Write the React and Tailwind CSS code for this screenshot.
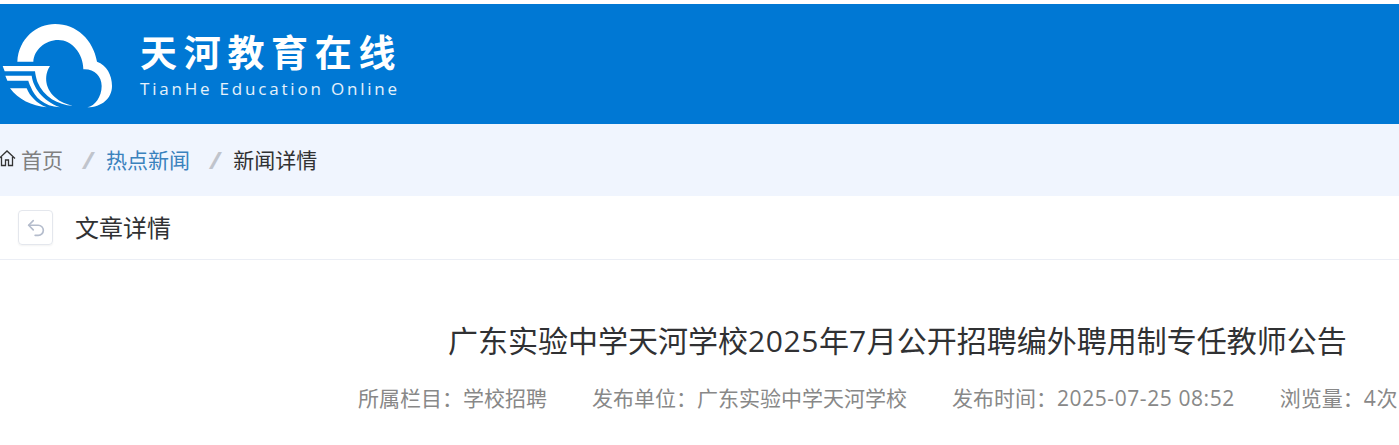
import React from 'react';
import { Undo2 } from 'lucide-react';

const cjk = 'font-["Open_Sans","Noto_Sans_CJK_SC",sans-serif]';

function Logo() {
  return (
    <svg width="130" height="110" viewBox="0 0 390 330" className="shrink-0 block">
      <path
        fill="#fff"
        d="M52 155 C56 85 110 42 165 42 C230 42 280 90 291 155 C320 165 336 195 336 228 C336 265 305 292 262 292 C285 288 305 260 305 228 C305 198 282 176 250 178 C250 130 215 90 175 90 C135 90 102 120 100 155 Z"
      />
      <path fill="#fff" d="M8 168 H150 C135 190 130 230 165 262 C180 276 200 284 218 287 C175 285 130 260 112 215 C108 203 106 192 105 184 H14 Z" />
      <path fill="#fff" d="M16 197 H95 C100 232 125 270 180 292 C130 288 105 262 92 230 C88 222 86 216 85 212 H22 Z" />
      <path fill="#fff" d="M30 235 H80 C90 260 110 280 140 292 C95 288 55 268 30 235 Z" />
    </svg>
  );
}

function HomeIcon() {
  return (
    <svg width="18" height="18" viewBox="0 0 18 18" fill="none" stroke="#333" strokeWidth="1.3" className="shrink-0 -ml-[2px] -mt-[5px]">
      <path d="M1 9.5 L9 2 L17 9.5" />
      <path d="M3.5 8 V16.5 H7.5 V11 H10.5 V16.5 H14.5 V8" />
    </svg>
  );
}

function Sep() {
  return <span className="ml-[20px] mr-[13px] text-[#c0c4cc] text-[24px] font-bold italic">/</span>;
}

export default function App() {
  return (
    <div className={`${cjk} h-[445px] overflow-hidden bg-white pt-1`}>
      <header className="h-[120px] bg-[#0078d4] flex items-start pt-[6px]">
        <Logo />
        <div className="ml-[10px] pt-[18px] text-white">
          <div className='font-["Noto_Sans_CJK_SC",sans-serif] text-[37px] leading-[46px] font-bold tracking-[6.7px]'>天河教育在线</div>
          <div className='font-["Open_Sans",sans-serif] text-[17px] leading-[22px] tracking-[2.8px] text-white/90 mt-[4px]'>TianHe Education Online</div>
        </div>
      </header>

      <nav className="h-[72px] bg-[#f0f5fe] flex items-center text-[21px] leading-none">
        <HomeIcon />
        <span className="ml-[5px] text-[#808080]">首页</span>
        <Sep />
        <span className="text-[#3a82bd]">热点新闻</span>
        <Sep />
        <span className="text-[#303133]">新闻详情</span>
      </nav>

      <div className="h-[64px] border-b border-[#ebeef5] flex items-center pl-[18px]">
        <button className="w-[35px] h-[35px] rounded border border-[#e4e7ed] shadow-[0_1px_2px_rgba(0,0,0,0.05)] flex items-center justify-center text-[#b4bccc]">
          <Undo2 size={22} strokeWidth={1.8} />
        </button>
        <span className="ml-[22px] text-[24px] text-[#303133]">文章详情</span>
      </div>

      <div className="pl-[358px] pt-[56px]">
        <h1 className="pl-[90px] text-[30px] leading-[50px] text-[#303133] whitespace-nowrap">
          广东实验中学天河学校<span className="tracking-[0.6px]">2025</span>年<span className="tracking-[0.6px]">7</span>月公开招聘编外聘用制专任教师公告
        </h1>
        <div className="mt-[17px] flex gap-[45px] text-[21px] leading-[30px] text-[#888] whitespace-nowrap">
          <span>所属栏目：学校招聘</span>
          <span>发布单位：广东实验中学天河学校</span>
          <span>发布时间：<span className="tracking-[0.58px]">2025-07-25 08:52</span></span>
          <span>浏览量：<span className="tracking-[0.58px]">4</span>次</span>
        </div>
      </div>
    </div>
  );
}
